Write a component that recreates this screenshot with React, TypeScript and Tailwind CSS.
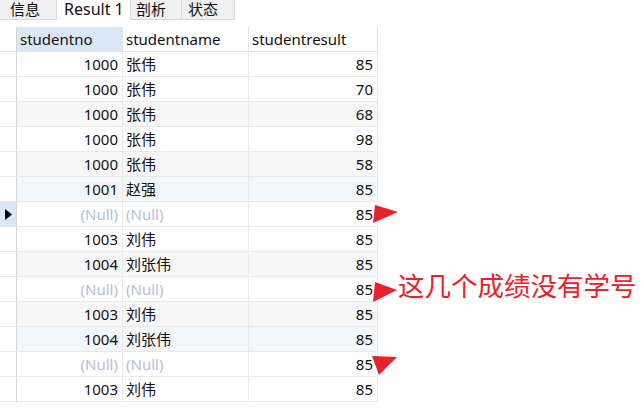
import React from "react";

type Row = { no: string | null; name: string | null; result: string; bg: string };

const rows: Row[] = [
  { no: "1000", name: "张伟", result: "85", bg: "bg-white" },
  { no: "1000", name: "张伟", result: "70", bg: "bg-white" },
  { no: "1000", name: "张伟", result: "68", bg: "bg-[#f7f7f7]" },
  { no: "1000", name: "张伟", result: "98", bg: "bg-white" },
  { no: "1000", name: "张伟", result: "58", bg: "bg-[#f7f7f7]" },
  { no: "1001", name: "赵强", result: "85", bg: "bg-[#f2f7fc]" },
  { no: null, name: null, result: "85", bg: "bg-white" },
  { no: "1003", name: "刘伟", result: "85", bg: "bg-white" },
  { no: "1004", name: "刘张伟", result: "85", bg: "bg-[#f7f7f7]" },
  { no: null, name: null, result: "85", bg: "bg-white" },
  { no: "1003", name: "刘伟", result: "85", bg: "bg-[#f7f7f7]" },
  { no: "1004", name: "刘张伟", result: "85", bg: "bg-[#f2f7fc]" },
  { no: null, name: null, result: "85", bg: "bg-white" },
  { no: "1003", name: "刘伟", result: "85", bg: "bg-white" },
];

const font = { fontFamily: '"Noto Sans", "Noto Sans CJK SC", sans-serif' };

export default function App() {
  return (
    <div className="relative w-[642px] h-[411px] bg-white overflow-hidden text-[#111]" style={font}>
      {/* tab bar */}
      <div className="flex h-[20px] items-stretch">
        <div className="w-[57px] bg-[#f0f0f0] border-r border-b border-[#d9d9d9] text-[15px] leading-[19px] pl-[10px]">信息</div>
        <div className="w-[73px] bg-white text-[16px] leading-[19px] pl-[7px]">Result 1</div>
        <div className="w-[52px] bg-[#f0f0f0] border-l border-r border-b border-[#d9d9d9] text-[15px] leading-[19px] pl-[5px]">剖析</div>
        <div className="w-[53px] bg-[#f0f0f0] border-r border-b border-[#d9d9d9] text-[15px] leading-[19px] pl-[6px]">状态</div>
      </div>

      {/* grid */}
      <div className="mt-[7px] flex flex-col w-[378px] text-[15px]">
        {/* header */}
        <div className="flex h-[25px] border-b border-[#e3e3e3]">
          <div className="w-[17px] border-r border-[#d6d6d6] bg-white" />
          <div className="w-[106px] bg-[#dae8f6] border-r border-[#e3e3e3] pl-[3px] leading-[24px]">studentno</div>
          <div className="w-[126px] border-r border-[#e3e3e3] pl-[3px] leading-[24px]">studentname</div>
          <div className="w-[129px] border-r border-[#e3e3e3] pl-[3px] leading-[24px]">studentresult</div>
        </div>
        {rows.map((r, i) => {
          const sel = i === 6;
          return (
            <div key={i} className="flex h-[25px] border-b border-[#e9e9e9]">
              <div
                className={
                  "w-[17px] border-r border-[#d6d6d6] flex items-center justify-center " +
                  (sel ? "bg-[#d9e8f6]" : "bg-white")
                }
              >
                {sel && (
                  <svg width="7" height="11" viewBox="0 0 7 11">
                    <polygon points="0,0 7,5.5 0,11" fill="#000" />
                  </svg>
                )}
              </div>
              <div className={"w-[106px] border-r border-[#e9e9e9] text-right pr-[4px] leading-[24px] " + r.bg}>
                {r.no === null ? <span className="text-[#b4c0d6]">(Null)</span> : r.no}
              </div>
              <div className={"w-[126px] border-r border-[#e9e9e9] pl-[3px] leading-[24px] " + r.bg}>
                {r.name === null ? <span className="text-[#b4c0d6]">(Null)</span> : r.name}
              </div>
              <div className={"w-[129px] border-r border-[#e9e9e9] text-right pr-[4px] leading-[24px] " + r.bg}>
                {r.result}
              </div>
            </div>
          );
        })}
      </div>

      {/* annotation text */}
      <div className="absolute left-[398px] top-[269px] text-[26.5px] leading-[34px] text-[#e8222c] whitespace-nowrap">
        这几个成绩没有学号
      </div>

      {/* arrows */}
      <svg className="absolute left-0 top-0 pointer-events-none" width="642" height="411">
        <polygon points="375,205 398,212 373,223" fill="#e8222c" />
        <polygon points="375,282 397,290 373,302" fill="#e8222c" />
        <polygon points="372,356 397,357 379,375" fill="#e8222c" />
      </svg>
    </div>
  );
}
